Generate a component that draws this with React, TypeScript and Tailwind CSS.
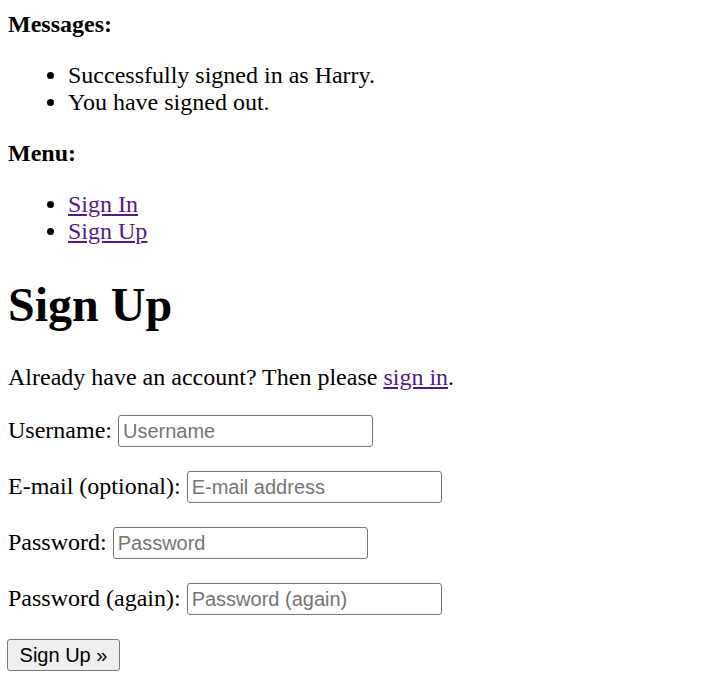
export default function App() {
  const fields = [
    { label: "Username:", placeholder: "Username", type: "text" },
    { label: "E-mail (optional):", placeholder: "E-mail address", type: "email" },
    { label: "Password:", placeholder: "Password", type: "password" },
    { label: "Password (again):", placeholder: "Password (again)", type: "password" },
  ];

  return (
    <div className="mx-2 mb-2 pt-[11px] bg-white text-black text-[24px] leading-[normal] font-['Liberation_Serif',serif]">
      <div>
        <strong className="font-bold">Messages:</strong>
        <ul className="list-disc my-[24px] pl-[60px]">
          <li>Successfully signed in as Harry.</li>
          <li>You have signed out.</li>
        </ul>
      </div>
      <div>
        <strong className="font-bold">Menu:</strong>
        <ul className="list-disc my-[24px] pl-[60px]">
          <li>
            <a href="#" className="text-[#551a8b] underline">
              Sign In
            </a>
          </li>
          <li>
            <a href="#" className="text-[#551a8b] underline">
              Sign Up
            </a>
          </li>
        </ul>
      </div>
      <h1 className="text-[48px] font-bold mt-[32px] mb-[32px]">Sign Up</h1>
      <p className="mb-[24px]">
        Already have an account? Then please{" "}
        <a href="#" className="text-[#551a8b] underline">
          sign in
        </a>
        .
      </p>
      <form onSubmit={(e) => e.preventDefault()}>
        {fields.map((f) => (
          <p key={f.label} className="my-[24px]">
            <label>{f.label}</label>{" "}
            <input
              type={f.type}
              placeholder={f.placeholder}
              className="w-[255px] h-[32px] px-[4px] align-baseline border border-[#767676] rounded-[3px] bg-white text-[20px] font-['Liberation_Sans',Arial,sans-serif] placeholder:text-[#757575]"
            />
          </p>
        ))}
        <button
          type="submit"
          className="-ml-px h-[32px] w-[113px] border border-[#767676] rounded-[3px] bg-[#efefef] text-[20px] font-['Liberation_Sans',Arial,sans-serif]"
        >
          Sign Up »
        </button>
      </form>
    </div>
  );
}
